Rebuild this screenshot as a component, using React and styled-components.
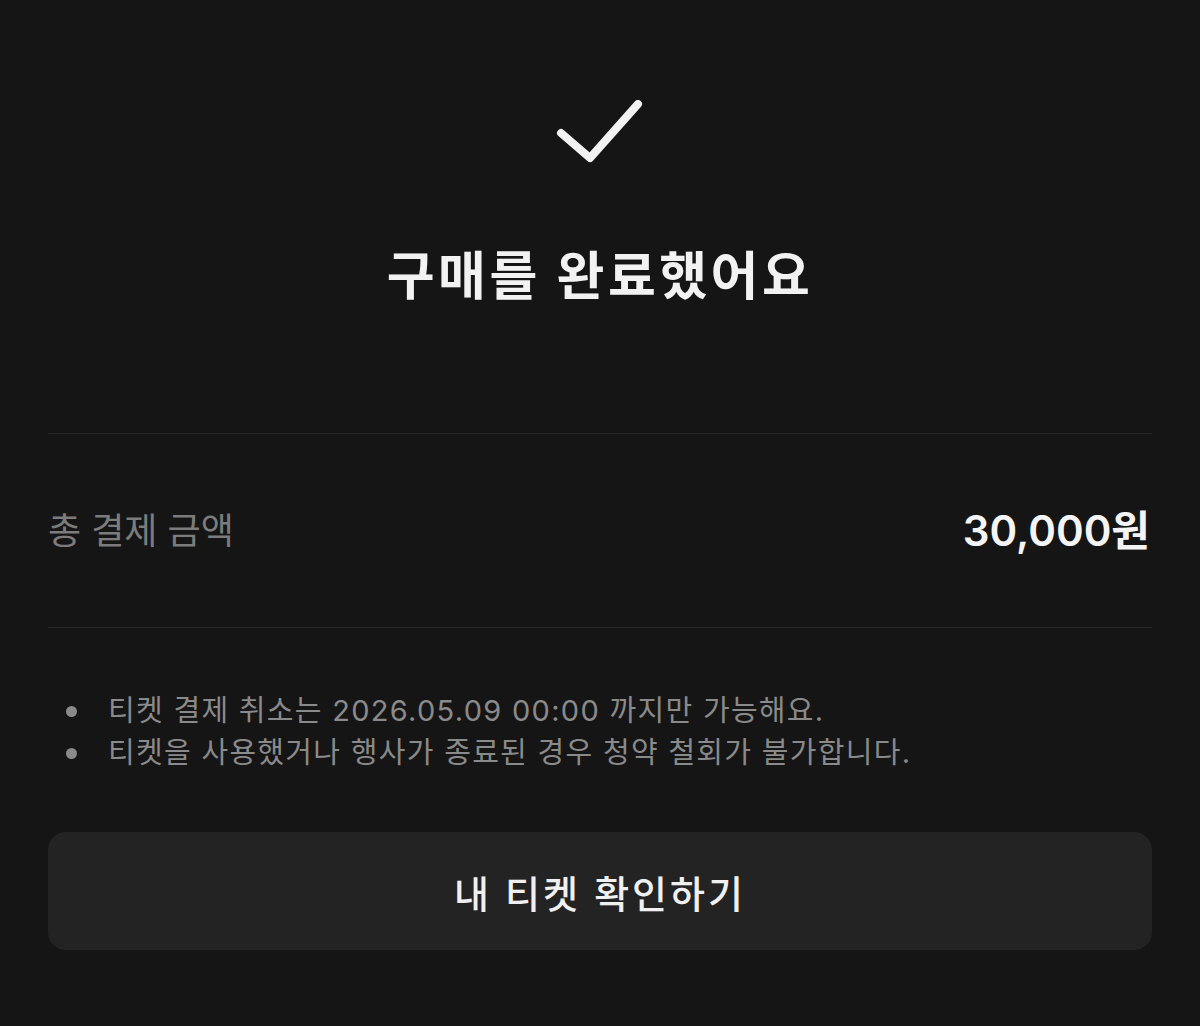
import React from "react";
import styled, { createGlobalStyle } from "styled-components";

const GlobalStyle = createGlobalStyle`
  html, body {
    margin: 0;
    padding: 0;
    background: #151515;
  }
  body {
    font-family: Inter, "Noto Sans CJK KR", "Noto Sans", sans-serif;
    color: #f2f2f2;
  }
`;

const notes = [
  "티켓 결제 취소는 2026.05.09 00:00 까지만 가능해요.",
  "티켓을 사용했거나 행사가 종료된 경우 청약 철회가 불가합니다.",
];

export default function App() {
  return (
    <>
      <GlobalStyle />
      <Page>
        <Header>
          <CheckIcon viewBox="0 0 100 64" fill="none">
            <path
              d="M7 33 L36 58 L84 4"
              stroke="#f2f2f2"
              strokeWidth="8"
              strokeLinecap="round"
              strokeLinejoin="round"
            />
          </CheckIcon>
          <Title>구매를 완료했어요</Title>
        </Header>

        <Divider />
        <SummaryRow>
          <Label>총 결제 금액</Label>
          <Amount>30,000원</Amount>
        </SummaryRow>
        <Divider />

        <Notes>
          {notes.map((n) => (
            <Note key={n}>{n}</Note>
          ))}
        </Notes>

        <PrimaryButton>내 티켓 확인하기</PrimaryButton>
      </Page>
    </>
  );
}

const Page = styled.main`
  width: 1200px;
  height: 1026px;
  box-sizing: border-box;
  padding: 0 48px;
  display: flex;
  flex-direction: column;
  overflow: hidden;
`;

const Header = styled.section`
  flex-shrink: 0;
  display: flex;
  flex-direction: column;
  align-items: center;
  padding-top: 100px;
  height: 433px;
  box-sizing: border-box;
`;

const CheckIcon = styled.svg`
  width: 100px;
  height: 64px;
  margin-left: 8px;
`;

const Title = styled.h1`
  margin: 87px 0 0;
  font-size: 52px;
  line-height: 1;
  font-weight: 700;
  letter-spacing: 3.5px;
  color: #f2f2f2;
`;

const Divider = styled.hr`
  flex-shrink: 0;
  margin: 0;
  border: none;
  height: 1px;
  background: #262626;
`;

const SummaryRow = styled.div`
  flex-shrink: 0;
  height: 193px;
  display: flex;
  align-items: center;
  justify-content: space-between;
  padding-right: 2px;
  padding-bottom: 6px;
  box-sizing: border-box;
`;

const Label = styled.span`
  font-size: 36px;
  font-weight: 400;
  letter-spacing: 0;
  color: #7c7c7c;
`;

const Amount = styled.span`
  font-size: 42px;
  font-weight: 600;
  color: #f4f4f4;
  letter-spacing: 0;
`;

const Notes = styled.ul`
  flex-shrink: 0;
  list-style: none;
  margin: 62px 0 0;
  padding: 0 0 0 60px;
  display: flex;
  flex-direction: column;
`;

const Note = styled.li`
  position: relative;
  font-size: 29px;
  line-height: 42px;
  letter-spacing: 1.3px;
  color: #8a8a8a;

  &::before {
    content: "";
    position: absolute;
    left: -42px;
    top: 16px;
    width: 11px;
    height: 11px;
    border-radius: 50%;
    background: #8a8a8a;
  }
`;

const PrimaryButton = styled.button`
  flex-shrink: 0;
  margin-top: 58px;
  height: 118px;
  border: none;
  border-radius: 18px;
  background: #232323;
  color: #f0f0f0;
  font-family: inherit;
  font-size: 38px;
  font-weight: 500;
  letter-spacing: 3px;
  cursor: pointer;
`;
